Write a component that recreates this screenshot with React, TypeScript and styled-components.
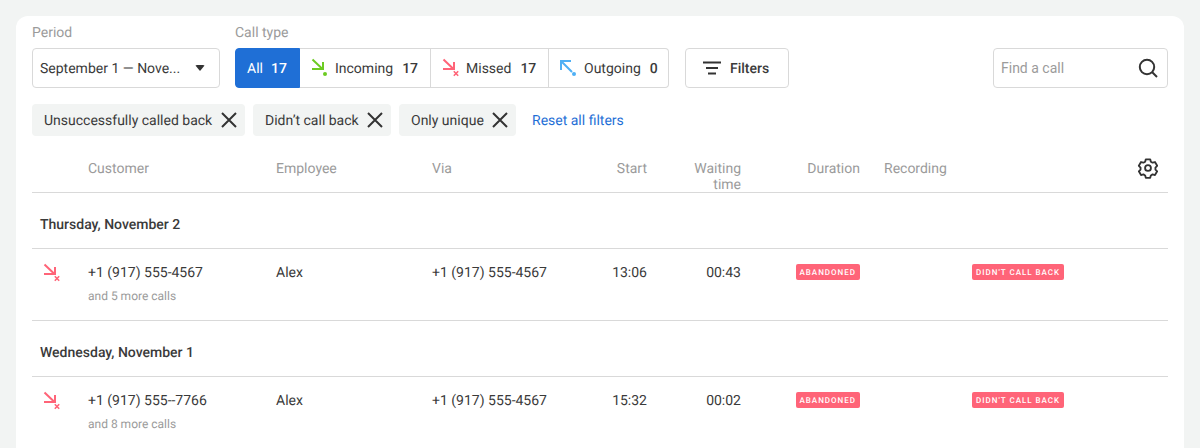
import React from "react";
import styled, { createGlobalStyle } from "styled-components";

const Global = createGlobalStyle`
  html, body { margin: 0; padding: 0; height: 448px; overflow: hidden; background: #f2f4f3; }
  body { font-family: Roboto, "Liberation Sans", sans-serif; font-size: 14px; color: #3a3a3a; text-rendering: geometricPrecision; }
`;

const Page = styled.div`
  padding: 16px 16px 0;
`;
const Card = styled.div`
  background: #fff;
  border-radius: 12px 12px 0 0;
  padding: 8px 16px 0;
  height: 432px;
  box-sizing: border-box;
  overflow: hidden;
`;
const Toolbar = styled.div`
  display: flex;
  align-items: flex-end;
`;
const Field = styled.div<{ $mr?: number }>`
  display: flex;
  flex-direction: column;
  gap: 8px;
  margin-right: ${(p) => p.$mr ?? 0}px;
`;
const Label = styled.div`
  font-size: 14px;
  line-height: 16px;
  height: 15px;
  padding-top: 1px;
  color: #9b9b9b;
`;
const Text = styled.span`
  padding-top: 2px;
  white-space: nowrap;
`;
const Select = styled.div`
  width: 188px;
  height: 40px;
  box-sizing: border-box;
  border: 1px solid #d9d9d9;
  border-radius: 4px;
  display: flex;
  align-items: center;
  justify-content: space-between;
  padding: 0 14px 0 7px;
`;
const Caret = styled.span`
  width: 0;
  height: 0;
  border-left: 5.5px solid transparent;
  border-right: 5.5px solid transparent;
  border-top: 6px solid #333;
  border-radius: 2px;
`;
const Segments = styled.div`
  display: flex;
  height: 40px;
`;
const Segment = styled.div<{ $w: number; $active?: boolean }>`
  width: ${(p) => p.$w}px;
  box-sizing: border-box;
  display: flex;
  align-items: center;
  gap: ${(p) => (p.$active ? 7 : 8)}px;
  padding-left: ${(p) => (p.$active ? 11 : 10)}px;
  background: ${(p) => (p.$active ? "#1f6fd6" : "#fff")};
  color: ${(p) => (p.$active ? "#fff" : "#3a3a3a")};
  border: 1px solid ${(p) => (p.$active ? "#1f6fd6" : "#d9d9d9")};
  border-left-width: ${(p) => (p.$active ? 1 : 0)}px;
  &:first-child { border-radius: 4px 0 0 4px; }
  &:last-child { border-radius: 0 4px 4px 0; }
`;
const SegLabel = styled(Text)`
  margin-left: -3px;
`;
const Count = styled(Text)`
  font-weight: 500;
  margin-left: 1px;
`;
const FilterButton = styled.div`
  margin-left: 16px;
  width: 104px;
  height: 40px;
  box-sizing: border-box;
  border: 1px solid #d9d9d9;
  border-radius: 4px;
  display: flex;
  align-items: center;
  gap: 8px;
  padding-left: 16px;
  font-weight: 500;
`;
const Search = styled.div`
  margin-left: auto;
  width: 175px;
  height: 40px;
  box-sizing: border-box;
  border: 1px solid #d9d9d9;
  border-radius: 4px;
  display: flex;
  align-items: center;
  justify-content: space-between;
  padding: 0 9px 0 7px;
`;
const SearchInput = styled.input`
  border: 0;
  outline: 0;
  padding: 0;
  width: 120px;
  font: inherit;
  color: #3a3a3a;
  &::placeholder { color: #9b9b9b; opacity: 1; }
`;
const Chips = styled.div`
  display: flex;
  align-items: center;
  gap: 8px;
  margin-top: 16px;
`;
const Chip = styled.div<{ $w: number }>`
  width: ${(p) => p.$w}px;
  height: 32px;
  box-sizing: border-box;
  background: #f2f4f3;
  border-radius: 4px;
  display: flex;
  align-items: center;
  justify-content: space-between;
  padding: 0 6px 0 12px;
`;
const ResetLink = styled.a`
  margin-left: 8px;
  padding-top: 2px;
  color: #1f6fd6;
`;
const cols = "56px 188px 156px 100px 115px 94px 119px 112px 1fr";
const HeaderRow = styled.div`
  display: grid;
  grid-template-columns: ${cols};
  margin-top: 24px;
  height: 32px;
  border-bottom: 1px solid #d9d9d9;
  color: #9b9b9b;
  font-size: 14px;
  line-height: 16px;
`;
const Cell = styled.div<{ $right?: boolean; $indent?: boolean }>`
  margin-top: 1px;
  white-space: nowrap;
  text-align: ${(p) => (p.$right ? "right" : "left")};
  padding-left: ${(p) => (p.$indent ? 24 : 0)}px;
`;
const GearCell = styled.div`
  display: flex;
  justify-content: flex-end;
  padding-right: 9px;
  margin-top: -3px;
`;
const Day = styled.div`
  height: 56px;
  box-sizing: border-box;
  padding: 9px 0 0 8px;
  display: flex;
  align-items: center;
  font-weight: 500;
  border-bottom: 1px solid #d9d9d9;
`;
const Row = styled.div`
  display: grid;
  grid-template-columns: ${cols};
  padding-top: 15px;
  height: 56px;
  border-bottom: 1px solid #d9d9d9;
  line-height: 16px;
`;
const IconCell = styled.div`
  padding-left: 10px;
  margin-top: -1px;
`;
const Sub = styled.div`
  margin-top: 7px;
  font-size: 12px;
  line-height: 16px;
  color: #9b9b9b;
`;
const BadgeCell = styled.div<{ $end?: boolean }>`
  display: flex;
  justify-content: ${(p) => (p.$end ? "flex-end" : "flex-start")};
`;
const Badge = styled.span`
  height: 16px;
  box-sizing: border-box;
  padding: 1px 4px 0;
  background: #ff6478;
  color: #fff;
  border-radius: 2px;
  font-size: 8px;
  font-weight: 500;
  letter-spacing: 1px;
  line-height: 15px;
  white-space: nowrap;
`;

const Arrow = ({ color, kind }: { color: string; kind: "in" | "miss" | "out" }) => (
  <svg width="20" height="20" viewBox="0 0 20 20" fill="none">
    {kind === "out" ? (
      <>
        <path d="M2 12V3H12M2.5 3.5L13 14" stroke={color} strokeWidth="2" />
        <circle cx="15" cy="16" r="2" fill={color} />
      </>
    ) : (
      <>
        <path d="M2.5 1.5L12.5 11M2 11H13V4" stroke={color} strokeWidth="2" />
        {kind === "in" ? (
          <circle cx="15" cy="16" r="2" fill={color} />
        ) : (
          <path d="M12.8 13.3L17.2 17.7M17.2 13.3L12.8 17.7" stroke={color} strokeWidth="1.6" />
        )}
      </>
    )}
  </svg>
);

const Close = () => (
  <svg width="20" height="20" viewBox="0 0 20 20" fill="none">
    <path d="M3 3L17 17M17 3L3 17" stroke="#333" strokeWidth="2" />
  </svg>
);

const FilterIcon = () => (
  <svg width="20" height="20" viewBox="0 0 20 20" fill="none">
    <path d="M1 4.5H19M4 10H16M6 15.5H14" stroke="#333" strokeWidth="2" />
  </svg>
);

const SearchIcon = () => (
  <svg width="20" height="20" viewBox="0 0 20 20" fill="none">
    <circle cx="9" cy="9" r="7.2" stroke="#333" strokeWidth="2" />
    <path d="M14 14L19 19" stroke="#333" strokeWidth="2" />
  </svg>
);

const GearIcon = () => (
  <svg width="22" height="22" viewBox="0 0 24 24" fill="none" stroke="#333" strokeWidth="2" strokeLinejoin="round">
    <path d="M9.6 2.5h4.8l.7 2.6 1.9 1.1 2.6-.7 2.4 4.1-1.9 1.9v2.2l1.9 1.9-2.4 4.1-2.6-.7-1.9 1.1-.7 2.6H9.6l-.7-2.6-1.9-1.1-2.6.7-2.4-4.1 1.9-1.9v-2.2L2 9.6l2.4-4.1 2.6.7 1.9-1.1z" />
    <circle cx="12" cy="12" r="3.2" />
  </svg>
);

const calls = [
  { day: "Thursday, November 2", phone: "+1 (917) 555-4567", more: "and 5 more calls", start: "13:06", wait: "00:43" },
  { day: "Wednesday, November 1", phone: "+1 (917) 555--7766", more: "and 8 more calls", start: "15:32", wait: "00:02" },
];

export default function App() {
  return (
    <Page>
      <Global />
      <Card>
        <Toolbar>
          <Field $mr={15}>
            <Label>Period</Label>
            <Select>
              <Text>September 1 — Nove...</Text>
              <Caret />
            </Select>
          </Field>
          <Field>
            <Label>Call type</Label>
            <Segments>
              <Segment $w={65} $active>
                <Text>All</Text>
                <Count>17</Count>
              </Segment>
              <Segment $w={131}>
                <Arrow color="#6ccb22" kind="in" />
                <SegLabel>Incoming</SegLabel>
                <Count>17</Count>
              </Segment>
              <Segment $w={118}>
                <Arrow color="#ff6478" kind="miss" />
                <SegLabel>Missed</SegLabel>
                <Count>17</Count>
              </Segment>
              <Segment $w={120}>
                <Arrow color="#4fb0f5" kind="out" />
                <SegLabel>Outgoing</SegLabel>
                <Count>0</Count>
              </Segment>
            </Segments>
          </Field>
          <FilterButton>
            <FilterIcon />
            <Text>Filters</Text>
          </FilterButton>
          <Search>
            <SearchInput placeholder="Find a call" readOnly />
            <SearchIcon />
          </Search>
        </Toolbar>
        <Chips>
          <Chip $w={213}>
            <Text>Unsuccessfully called back</Text>
            <Close />
          </Chip>
          <Chip $w={138}>
            <Text>Didn’t call back</Text>
            <Close />
          </Chip>
          <Chip $w={117}>
            <Text>Only unique</Text>
            <Close />
          </Chip>
          <ResetLink>Reset all filters</ResetLink>
        </Chips>
        <HeaderRow>
          <Cell />
          <Cell>Customer</Cell>
          <Cell>Employee</Cell>
          <Cell>Via</Cell>
          <Cell $right>Start</Cell>
          <Cell $right>
            Waiting
            <br />
            time
          </Cell>
          <Cell $right>Duration</Cell>
          <Cell $indent>Recording</Cell>
          <GearCell>
            <GearIcon />
          </GearCell>
        </HeaderRow>
        {calls.map((c) => (
          <React.Fragment key={c.day}>
            <Day>{c.day}</Day>
            <Row>
              <IconCell>
                <Arrow color="#ff6478" kind="miss" />
              </IconCell>
              <Cell>
                {c.phone}
                <Sub>{c.more}</Sub>
              </Cell>
              <Cell>Alex</Cell>
              <Cell>+1 (917) 555-4567</Cell>
              <Cell $right>{c.start}</Cell>
              <Cell $right>{c.wait}</Cell>
              <BadgeCell $end>
                <Badge>ABANDONED</Badge>
              </BadgeCell>
              <Cell />
              <BadgeCell>
                <Badge>DIDN'T CALL BACK</Badge>
              </BadgeCell>
            </Row>
          </React.Fragment>
        ))}
      </Card>
    </Page>
  );
}
